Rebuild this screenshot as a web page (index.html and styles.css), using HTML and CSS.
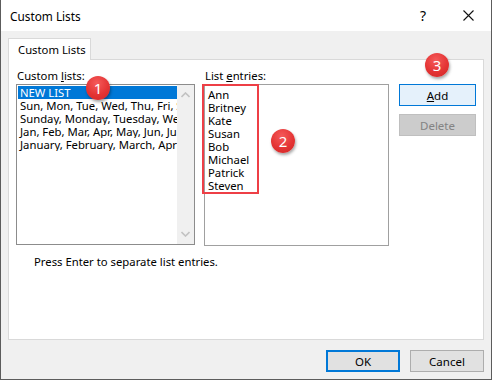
FILE: index.html
```html
<!DOCTYPE html>
<html lang="en">
<head>
  <meta charset="UTF-8" />
  <title>Custom Lists</title>
  <link rel="stylesheet" href="styles.css">
</head>
<body>
  <div class="window">
    <div class="titlebar">
      <span class="titlebar__title">Custom Lists</span>
      <span class="titlebar__help">?</span>
      <span class="titlebar__close">
        <svg width="11" height="11" viewBox="0 0 11 11"><path d="M0.5 0.5 L10.5 10.5 M10.5 0.5 L0.5 10.5" stroke="#111" stroke-width="1.1" fill="none"/></svg>
      </span>
    </div>

    <div class="body">
      <div class="tabs">
        <div class="tab">Custom Lists</div>
      </div>

      <div class="panel">
        <div class="columns">
          <div class="col col--lists">
            <div class="label">Custom <u>l</u>ists:</div>
            <div class="listbox">
              <div class="listbox__items">
                <div class="listbox__item listbox__item--selected">NEW LIST</div>
                <div class="listbox__item">Sun, Mon, Tue, Wed, Thu, Fri, Sat</div>
                <div class="listbox__item">Sunday, Monday, Tuesday, Wednesday</div>
                <div class="listbox__item">Jan, Feb, Mar, Apr, May, Jun, Jul</div>
                <div class="listbox__item">January, February, March, April</div>
              </div>
              <div class="scrollbar">
                <svg width="9" height="6" viewBox="0 0 9 6"><path d="M0.5 5 L4.5 1 L8.5 5" stroke="#c2c2c2" stroke-width="1.6" fill="none"/></svg>
                <svg width="9" height="6" viewBox="0 0 9 6"><path d="M0.5 1 L4.5 5 L8.5 1" stroke="#c2c2c2" stroke-width="1.6" fill="none"/></svg>
              </div>
            </div>
          </div>

          <div class="col col--entries">
            <div class="label">List <u>e</u>ntries:</div>
            <div class="entries">
              <div class="entries__mark">
                <div>Ann</div>
                <div>Britney</div>
                <div>Kate</div>
                <div>Susan</div>
                <div>Bob</div>
                <div>Michael</div>
                <div>Patrick</div>
                <div>Steven</div>
              </div>
            </div>
          </div>

          <div class="col col--buttons">
            <button class="btn btn--focus"><u>A</u>dd</button>
            <button class="btn btn--disabled">Delete</button>
          </div>
        </div>

        <p class="hint">Press Enter to separate list entries.</p>
      </div>

      <div class="footer">
        <button class="btn btn--default">OK</button>
        <button class="btn">Cancel</button>
      </div>
    </div>

    <!-- номера-пометки поверх окна -->
    <span class="badge badge--1">1</span>
    <span class="badge badge--2">2</span>
    <span class="badge badge--3">3</span>
  </div>
</body>
</html>
```

FILE: styles.css
```css
html, body {
  margin: 0;
  padding: 0;
}

body {
  width: 492px;
  height: 380px;
  overflow: hidden;
  background: #ffffff;
  font-family: 'Noto Sans', 'Open Sans', sans-serif;
  font-size: 11.3px;
  color: #000;
}

.window {
  position: relative;
  box-sizing: border-box;
  width: 492px;
  height: 380px;
  border: 1px solid #5c5c5c;
  border-top: none;
  background: #f0f0f0;
  display: flex;
  flex-direction: column;
}

.titlebar {
  height: 31px;
  background: #fff;
  display: flex;
  align-items: center;
  padding-left: 9px;
  flex-shrink: 0;
}

.titlebar__title {
  flex: 1;
  font-size: 11.8px;
}

.titlebar__help {
  width: 20px;
  text-align: center;
  margin-right: 30px;
  font-size: 14px;
}

.titlebar__close {
  width: 11px;
  height: 11px;
  display: flex;
  margin-right: 17px;
}

.body {
  flex: 1;
  padding: 7px 7px 0 7px;
  display: flex;
  flex-direction: column;
}

.tabs {
  display: flex;
  height: 21px;
}

.tab {
  position: relative;
  z-index: 1;
  box-sizing: border-box;
  width: 83px;
  height: 22px;
  background: #fff;
  border: 1px solid #d9d9d9;
  border-bottom: none;
  padding-left: 9px;
  line-height: 22px;
}

.panel {
  box-sizing: border-box;
  height: 281px;
  background: #fff;
  border: 1px solid #d9d9d9;
  padding: 8px 7px 0 7px;
}

.columns {
  display: flex;
  gap: 9px;
}

.label {
  line-height: 16px;
  height: 16px;
  padding-left: 1px;
}

.listbox {
  box-sizing: border-box;
  width: 179px;
  height: 161px;
  border: 1px solid #8c8c8c;
  padding: 1px;
  display: flex;
}

.listbox__items {
  flex: 1;
  overflow: hidden;
}

.listbox__item {
  height: 13px;
  line-height: 13px;
  padding-left: 2px;
  white-space: nowrap;
  overflow: hidden;
}

.listbox__item--selected {
  background: #0078d7;
  color: #fff;
}

.scrollbar {
  width: 17px;
  background: #f0f0f0;
  margin: -1px -1px -1px 0;
  display: flex;
  flex-direction: column;
  justify-content: space-between;
  align-items: center;
  padding: 7px 0 7px;
}

.entries {
  box-sizing: border-box;
  width: 185px;
  height: 162px;
  border: 1px solid #a0a0a0;
}

.entries__mark {
  display: inline-block;
  box-sizing: border-box;
  width: 57px;
  margin: -1px 0 0 -3px;
  padding: 2px 0 0 4px;
  border: 2px solid #ee3f46;
  line-height: 13px;
}

.col--buttons {
  display: flex;
  flex-direction: column;
  gap: 8px;
  padding-top: 16px;
  margin-left: 1px;
}

.btn {
  box-sizing: border-box;
  width: 77px;
  height: 22px;
  font-family: inherit;
  font-size: 11.5px;
  background: #e1e1e1;
  border: 1px solid #adadad;
  color: #000;
  padding: 0;
}

.btn--focus {
  background: #e5f1fb;
  border-color: #0078d7;
}

.btn--disabled {
  background: #cccccc;
  border-color: #bfbfbf;
  color: #838383;
}

.hint {
  margin: 8px 0 0 18px;
  line-height: 16px;
}

.footer {
  display: flex;
  justify-content: flex-end;
  gap: 10px;
  padding-top: 10px;
}

.footer .btn {
  width: 74px;
}

.btn--default {
  border: 2px solid #0078d7;
}

.badge {
  position: absolute;
  width: 24px;
  height: 24px;
  border-radius: 50%;
  background: radial-gradient(circle at 45% 30%, #f55a5a 0%, #e43434 55%, #cf2626 100%);
  box-shadow: 1px 2px 3px rgba(0, 0, 0, 0.35);
  color: #fff;
  font-size: 15px;
  line-height: 24px;
  text-align: center;
}

.badge--1 {
  left: 85px;
  top: 76px;
}

.badge--2 {
  left: 270px;
  top: 129px;
}

.badge--3 {
  left: 424px;
  top: 53px;
}
```
